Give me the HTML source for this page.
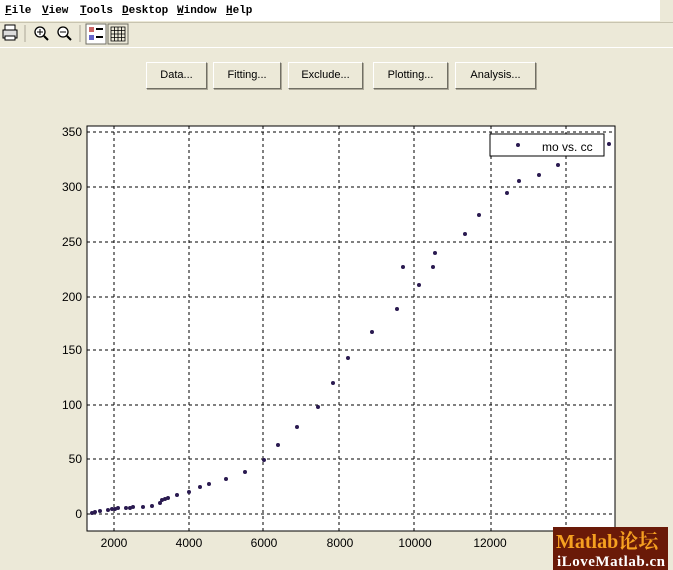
<!DOCTYPE html>
<html><head><style>
body{margin:0;width:673px;height:570px;background:#ECE9D8;position:relative;overflow:hidden;font-family:"Liberation Sans",sans-serif}
.menu{position:absolute;left:0;top:0;width:660px;height:21px;background:#fff;font-family:"Liberation Mono",monospace;font-size:11px;font-weight:bold}
.menu span{position:absolute;top:5px}
.tb{position:absolute;top:22px;left:0;width:673px;height:24px;border-bottom:1px solid #fff;border-top:1px solid #c8c4b0}
.btn{position:absolute;top:62px;height:25px;background:#ECE9D8;border:1px solid;border-color:#fff #716f64 #716f64 #fff;box-shadow:1px 1px 0 #aca899;font-size:11px;text-align:center;line-height:25px;color:#000}
</style></head><body>
<div class="menu">
<span style="left:5px"><u>F</u>ile</span><span style="left:42px"><u>V</u>iew</span><span style="left:80px"><u>T</u>ools</span><span style="left:122px"><u>D</u>esktop</span><span style="left:177px"><u>W</u>indow</span><span style="left:226px"><u>H</u>elp</span>
</div>
<div class="tb"></div>
<svg style="position:absolute;left:0;top:22px" width="140" height="24">
<rect x="3" y="8" width="14" height="8" fill="#ddd" stroke="#000"/><rect x="5" y="3" width="10" height="5" fill="#fff" stroke="#000"/><rect x="5" y="14" width="10" height="4" fill="#fff" stroke="#000"/>
<line x1="25" y1="3" x2="25" y2="20" stroke="#aca899"/>
<circle cx="40" cy="10" r="5" fill="#fff" stroke="#000" stroke-width="1.3"/><line x1="44" y1="14" x2="48" y2="18" stroke="#000" stroke-width="2"/><path d="M37 10h6M40 7v6" stroke="#000"/>
<circle cx="63" cy="10" r="5" fill="#fff" stroke="#000" stroke-width="1.3"/><line x1="67" y1="14" x2="71" y2="18" stroke="#000" stroke-width="2"/><path d="M60 10h6" stroke="#000"/>
<line x1="80" y1="3" x2="80" y2="20" stroke="#aca899"/>
<rect x="86" y="2" width="20" height="20" fill="#fff" stroke="#716f64"/><rect x="89" y="5" width="5" height="5" fill="#c66"/><rect x="89" y="13" width="5" height="5" fill="#66c"/><path d="M96 7h7M96 15h7" stroke="#000" stroke-width="2"/>
<rect x="108" y="2" width="20" height="20" fill="#ECE9D8" stroke="#716f64"/><path d="M111 5h14v14h-14zM111 8.5h14M111 12h14M111 15.5h14M114.5 5v14M118 5v14M121.5 5v14" stroke="#000" fill="none" stroke-width=".8"/>
</svg>
<div class="btn" style="left:146px;width:59px">Data...</div>
<div class="btn" style="left:213px;width:66px">Fitting...</div>
<div class="btn" style="left:288px;width:73px">Exclude...</div>
<div class="btn" style="left:373px;width:73px">Plotting...</div>
<div class="btn" style="left:455px;width:79px">Analysis...</div>
<svg style="position:absolute;left:0;top:0" width="673" height="570" font-family="Liberation Sans Narrow, Liberation Sans" font-size="12">
<rect x="87" y="126" width="528" height="405" fill="#fff" stroke="#000"/>
<g stroke="#000" stroke-dasharray="3,3" stroke-width="1">
<path d="M114 126v405M189 126v405M263 126v405M339 126v405M414 126v405M491 126v405M566 126v405"/>
<path d="M87 514h528M87 459h528M87 405h528M87 350h528M87 297h528M87 242h528M87 187h528M87 132h528"/>
</g>
<g text-anchor="end">
<text x="82" y="518">0</text><text x="82" y="463">50</text><text x="82" y="409">100</text><text x="82" y="354">150</text><text x="82" y="301">200</text><text x="82" y="246">250</text><text x="82" y="191">300</text><text x="82" y="136">350</text>
</g>
<g text-anchor="middle">
<text x="114" y="547">2000</text><text x="189" y="547">4000</text><text x="264" y="547">6000</text><text x="340" y="547">8000</text><text x="415" y="547">10000</text><text x="490" y="547">12000</text>
</g>
<rect x="490" y="134" width="114" height="22" fill="#fff" stroke="#000"/>
<text x="542" y="151" font-size="12">mo vs. cc</text>
<g fill="#2a1a50">
<circle cx="518" cy="145" r="2"/>
<circle cx="92" cy="513" r="2"/><circle cx="95" cy="512" r="2"/><circle cx="100" cy="511" r="2"/><circle cx="108" cy="510" r="2"/><circle cx="112" cy="509" r="2"/><circle cx="115" cy="509" r="2"/><circle cx="118" cy="508" r="2"/><circle cx="126" cy="508" r="2"/><circle cx="130" cy="508" r="2"/><circle cx="133" cy="507" r="2"/><circle cx="143" cy="507" r="2"/><circle cx="152" cy="506" r="2"/><circle cx="160" cy="503" r="2"/><circle cx="162" cy="500" r="2"/><circle cx="165" cy="499" r="2"/><circle cx="168" cy="498" r="2"/><circle cx="177" cy="495" r="2"/><circle cx="189" cy="492" r="2"/><circle cx="200" cy="487" r="2"/><circle cx="209" cy="484" r="2"/><circle cx="226" cy="479" r="2"/><circle cx="245" cy="472" r="2"/><circle cx="264" cy="460" r="2"/><circle cx="278" cy="445" r="2"/><circle cx="297" cy="427" r="2"/><circle cx="318" cy="407" r="2"/><circle cx="333" cy="383" r="2"/><circle cx="348" cy="358" r="2"/><circle cx="372" cy="332" r="2"/><circle cx="397" cy="309" r="2"/><circle cx="419" cy="285" r="2"/><circle cx="403" cy="267" r="2"/><circle cx="433" cy="267" r="2"/><circle cx="435" cy="253" r="2"/><circle cx="465" cy="234" r="2"/><circle cx="479" cy="215" r="2"/><circle cx="507" cy="193" r="2"/><circle cx="519" cy="181" r="2"/><circle cx="539" cy="175" r="2"/><circle cx="558" cy="165" r="2"/><circle cx="609" cy="144" r="2"/>
</g>
<rect x="553" y="527" width="115" height="43" fill="#6a1a08"/>
<text x="556" y="548" font-family="Liberation Serif,Noto Serif CJK SC,serif" font-size="20" font-weight="bold" fill="#f5a020">Matlab论坛</text>
<text x="557" y="566" font-family="Liberation Serif,serif" font-size="15" font-weight="bold" fill="#fff" textLength="108">iLoveMatlab.cn</text>
</svg>
</body></html>
